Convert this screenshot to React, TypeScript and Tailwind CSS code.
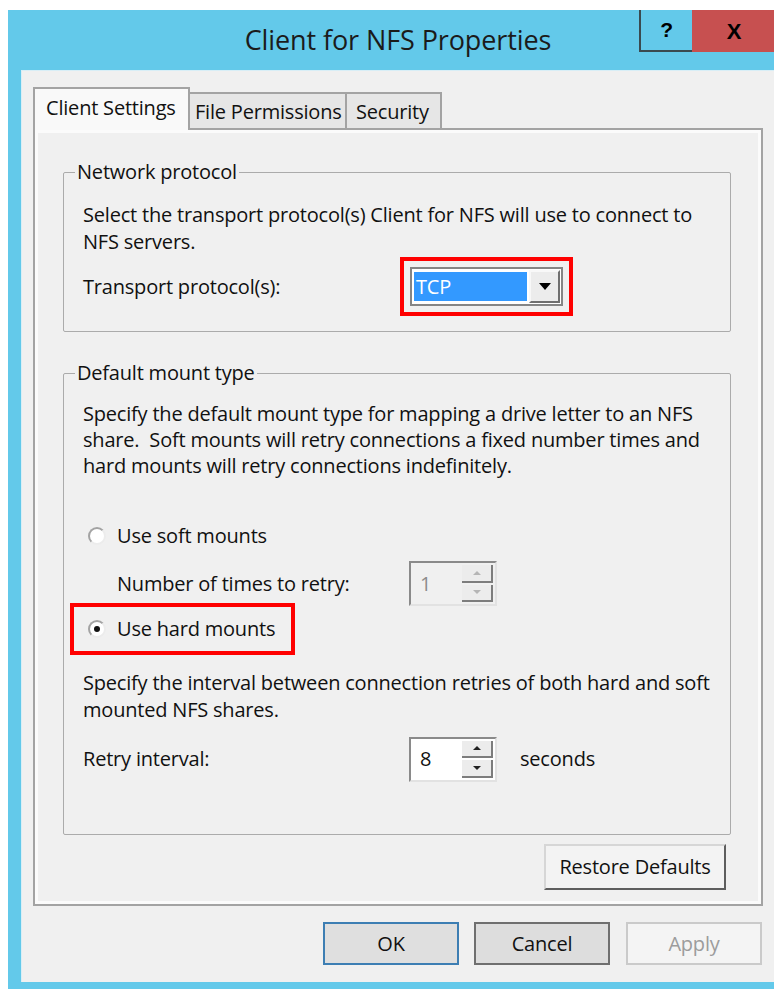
import React from 'react';

// Small spin control (edit box + up/down arrows)
function SpinBox({ value, disabled = false }: { value: string; disabled?: boolean }) {
  const arrow = disabled ? 'border-[#b5b5b5]' : 'border-[#222]';
  return (
    <div
      className={`w-[88px] h-[45px] flex items-stretch border-2 border-t-[#8a8a8a] border-l-[#8a8a8a] border-r-[#e2e2e2] border-b-[#e2e2e2] ${
        disabled ? 'bg-[#f0f0f0] text-[#8c8c8c]' : 'bg-white text-[#111]'
      }`}
    >
      <div className="flex-1 flex items-center pl-[9px]">{value}</div>
      <div className="w-[33px] flex flex-col gap-[2px] py-[2px] pr-[2px]">
        <div className="flex-1 flex items-center justify-center bg-[#ececec] border-b-2 border-r-2 border-[#7d7d7d]">
          <span className={`w-0 h-0 border-x-[4px] border-x-transparent border-b-[4px] ${arrow}`} />
        </div>
        <div className="flex-1 flex items-center justify-center bg-[#ececec] border-b-2 border-r-2 border-[#7d7d7d]">
          <span className={`w-0 h-0 border-x-[4px] border-x-transparent border-t-[4px] ${arrow}`} />
        </div>
      </div>
    </div>
  );
}

function Radio({ checked = false }: { checked?: boolean }) {
  return (
    <span className="w-[18px] h-[18px] shrink-0 rounded-full bg-white border-2 border-t-[#a3a3a3] border-l-[#a3a3a3] border-r-[#ececec] border-b-[#ececec] flex items-center justify-center">
      {checked && <span className="w-[6px] h-[6px] rounded-full bg-[#111]" />}
    </span>
  );
}

export default function App() {
  return (
    <div className="w-[774px] h-[989px] overflow-hidden bg-white font-['Open_Sans',sans-serif] text-[20px] tracking-[-0.2px] text-[#111]">
      <div className="ml-[8px] mt-[10px] w-[790px] h-[990px] bg-[#63c9ea] flex flex-col">
        {/* caption bar */}
        <div className="h-[60px] shrink-0 flex items-start">
          <div className="ml-[165px] w-[450px] h-[60px] flex items-center justify-center text-[27px] tracking-[-0.1px] text-[#1b1b1b]">
            Client for NFS Properties
          </div>
          <div className="ml-[16px] w-[53px] h-[42px] border-l-2 border-b-2 border-[#3a4a50] flex items-center justify-center font-['Liberation_Sans',sans-serif] font-bold text-[21px] text-black">
            ?
          </div>
          <div className="w-[96px] h-[42px] bg-[#c75050] flex items-center justify-center font-['Liberation_Sans',sans-serif] font-bold text-[22px] text-black pr-[12px]">
            X
          </div>
        </div>

        {/* client area */}
        <div className="ml-[13px] h-[912px] bg-[#f0f0f0] border-l border-t border-[#d8eef6] pl-[11px] pt-[16px]">
          {/* tab strip */}
          <div className="h-[41px] flex items-end">
            <div className="relative z-10 w-[157px] h-[43px] -mb-[2px] bg-[#f9f9f9] border-2 border-b-0 border-[#a3a3a3] pl-[11px] pt-[4px]">
              Client Settings
            </div>
            <div className="w-[157px] h-[36px] bg-[#e6e6e6] border-2 border-b-0 border-l-0 border-[#a3a3a3] pl-[5px] pt-[3px]">
              File Permissions
            </div>
            <div className="w-[95px] h-[36px] bg-[#e6e6e6] border-2 border-b-0 border-l-0 border-[#a3a3a3] pl-[9px] pt-[3px]">
              Security
            </div>
          </div>

          {/* tab page */}
          <div className="w-[730px] h-[778px] border-2 border-[#a3a3a3] shadow-[inset_0_0_0_3px_#fbfbfb] pl-[28px] pr-[30px] pt-[29px] flex flex-col">
            <fieldset className="border border-[#ababab] rounded-[2px]">
              <legend className="ml-[11px] px-[2px] leading-[26px]">Network protocol</legend>
              <div className="pl-[19px] pr-[10px] pt-[16px] pb-[15px]">
                <p className="leading-[27px]">
                  Select the transport protocol(s) Client for NFS will use to connect to NFS servers.
                </p>
                <div className="mt-[2px] h-[59px] flex items-center">
                  <span className="w-[317px]">Transport protocol(s):</span>
                  <div className="w-[173px] h-[59px] border-4 border-[#ff0000] p-[6px]">
                    <div className="h-full flex border-2 border-[#858585] bg-white p-[1px]">
                      <div className="flex-1 bg-[#3399ff] text-white flex items-center pl-[2px] my-[2px] ml-[1px]">
                        TCP
                      </div>
                      <div className="w-[31px] ml-[2px] bg-[#ececec] border-2 border-t-[#f8f8f8] border-l-[#f8f8f8] border-r-[#6f6f6f] border-b-[#6f6f6f] flex items-center justify-center">
                        <span className="w-0 h-0 border-x-[6px] border-x-transparent border-t-[7px] border-t-black" />
                      </div>
                    </div>
                  </div>
                </div>
              </div>
            </fieldset>

            <fieldset className="mt-[28px] border border-[#ababab] rounded-[2px]">
              <legend className="ml-[11px] px-[2px] leading-[26px]">Default mount type</legend>
              <div className="pl-[19px] pr-[10px] pt-[15px] pb-[53px]">
                <p className="leading-[26px]">
                  Specify the default mount type for mapping a drive letter to an NFS share.&nbsp; Soft mounts will retry connections a fixed number times and hard mounts will retry connections indefinitely.
                </p>

                <div className="mt-[42px] h-[30px] flex items-center pl-[5px] gap-[11px]">
                  <Radio />
                  <span>Use soft mounts</span>
                </div>

                <div className="mt-[10px] h-[45px] flex items-center pl-[34px]">
                  <span className="w-[292px]">Number of times to retry:</span>
                  <SpinBox value="1" disabled />
                </div>

                <div className="-mt-[3px] -ml-[13px] w-[225px] h-[52px] border-4 border-[#ff0000] flex items-center pl-[14px] gap-[11px]">
                  <Radio checked />
                  <span>Use hard mounts</span>
                </div>

                <p className="mt-[14px] leading-[27px]">
                  Specify the interval between connection retries of both hard and soft mounted NFS shares.
                </p>

                <div className="mt-[14px] h-[44px] flex items-center">
                  <span className="w-[326px]">Retry interval:</span>
                  <SpinBox value="8" />
                  <span className="ml-[23px]">seconds</span>
                </div>
              </div>
            </fieldset>

            <div className="mt-[9px] flex justify-end mr-[5px]">
              <button className="w-[182px] h-[46px] bg-[#f3f3f3] border-2 border-t-[#d6d6d6] border-l-[#d6d6d6] border-r-[#5e5e5e] border-b-[#5e5e5e]">
                Restore Defaults
              </button>
            </div>
          </div>

          {/* dialog buttons */}
          <div className="w-[730px] mt-[16px] flex justify-end gap-[15px] pr-[1px]">
            <button className="w-[136px] h-[43px] bg-[#dfdfdf] border-2 border-[#3d7eb3]">OK</button>
            <button className="w-[136px] h-[43px] bg-[#dddddd] border-2 border-[#6f6f6f]">Cancel</button>
            <button className="ml-[1px] w-[136px] h-[43px] bg-[#f4f4f4] border-2 border-[#cacaca] text-[#9c9c9c]">Apply</button>
          </div>
        </div>
      </div>
    </div>
  );
}
